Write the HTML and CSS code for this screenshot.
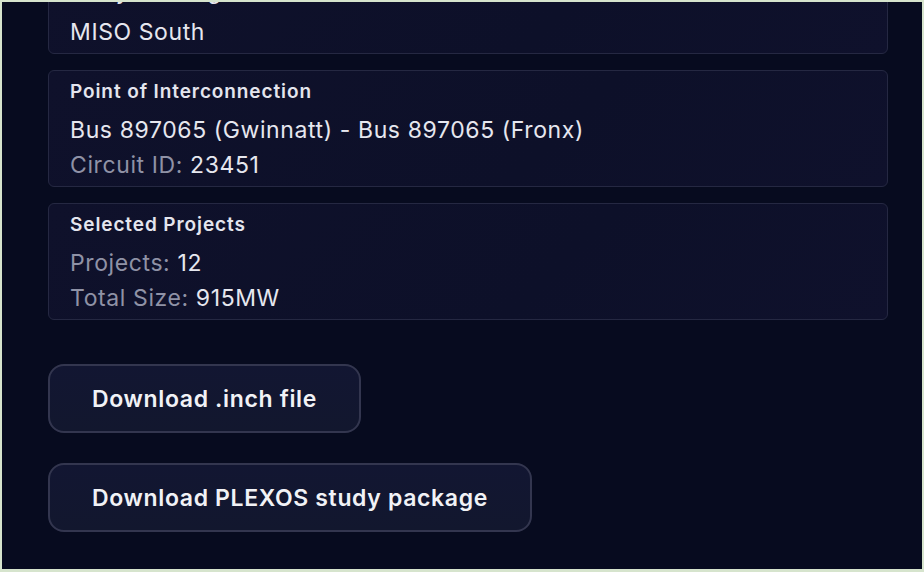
FILE: index.html
```html
<!DOCTYPE html>
<html lang="en">
<head>
<meta charset="utf-8">
<title>Study summary</title>
<link rel="stylesheet" href="styles.css">
</head>
<body>
<div class="frame">
  <main class="panel">
    <section class="card">
      <h3 class="card-title">Study Planning Zone</h3>
      <p class="line value">MISO South</p>
    </section>
    <section class="card">
      <h3 class="card-title">Point of Interconnection</h3>
      <p class="line value">Bus 897065 (Gwinnatt) - Bus 897065 (Fronx)</p>
      <p class="line"><span class="label">Circuit ID:</span> <span class="value">23451</span></p>
    </section>
    <section class="card">
      <h3 class="card-title">Selected Projects</h3>
      <p class="line"><span class="label">Projects:</span> <span class="value">12</span></p>
      <p class="line"><span class="label">Total Size:</span> <span class="value">915MW</span></p>
    </section>
    <div class="actions">
      <button class="btn">Download .inch file</button>
      <button class="btn">Download PLEXOS study package</button>
    </div>
  </main>
</div>
</body>
</html>
```

FILE: styles.css
```css
* { box-sizing: border-box; }
html, body { margin: 0; padding: 0; height: 100%; }
body {
  background: #d6e4cd;
  font-family: Inter, "Noto Sans", "Liberation Sans", sans-serif;
  overflow: hidden;
}
.frame {
  width: 924px;
  height: 572px;
  padding: 2px 2px 3px 2px;
}
.panel {
  height: 100%;
  background: #070b1f;
  overflow: hidden;
  padding: 0 34px 0 46px;
  display: flex;
  flex-direction: column;
  gap: 16px;
}
.card {
  margin: 0;
  border: 1px solid #252842;
  border-radius: 6px;
  background: linear-gradient(135deg, #0f112b 0%, #0d1029 60%, #0f112c 100%);
  padding: 9px 20px 3px 21px;
}
.panel > .card:first-child { margin-top: -30px; }
.card-title {
  margin: 0 0 9px 0;
  font-size: 19px;
  line-height: 24px;
  font-weight: 600;
  color: #e4e5ee;
  letter-spacing: 0.9px;
}
.line {
  margin: 0;
  font-size: 23px;
  line-height: 35px;
  font-weight: 400;
  letter-spacing: 0.6px;
}
.value { color: #e6e7ef; }
.label { color: #8f92a6; }
.actions {
  margin-top: 28px;
  display: flex;
  flex-direction: column;
  align-items: flex-start;
  gap: 30px;
}
.btn {
  height: 69px;
  padding: 0 42px;
  border: 2px solid #33364f;
  border-radius: 16px;
  background: linear-gradient(180deg, #121632 0%, #12172e 100%);
  color: #f1f2f6;
  font-family: Inter, "Noto Sans", "Liberation Sans", sans-serif;
  font-size: 23px;
  font-weight: 600;
  letter-spacing: 0.65px;
  cursor: pointer;
}
```
